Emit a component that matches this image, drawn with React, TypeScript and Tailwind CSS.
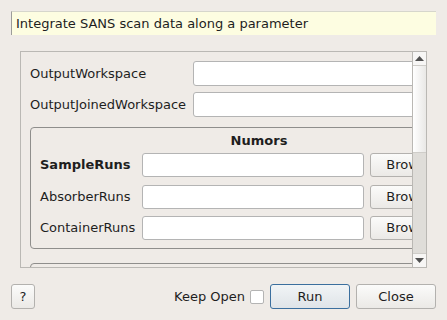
import React from 'react';

function TextInput({ className = '' }: { className?: string }) {
  return <div className={`bg-white border border-[#b4b4b4] rounded-[3px] ${className}`} />;
}

function Button({ label, className = '', primary = false }: { label: string; className?: string; primary?: boolean }) {
  return (
    <div
      className={`flex items-center justify-center rounded-[3px] border shrink-0 overflow-hidden whitespace-nowrap ${
        primary
          ? 'border-[#3b6f9e] bg-gradient-to-b from-[#f1f4f6] to-[#dfe4e8]'
          : 'border-[#b3b1ae] bg-gradient-to-b from-[#fbfbfa] to-[#ebe9e6]'
      } ${className}`}
    >
      {label}
    </div>
  );
}

function Arrow({ up }: { up?: boolean }) {
  return (
    <svg width="9" height="5" viewBox="0 0 9 5">
      {up ? <polygon points="0,5 9,5 4.5,0" fill="#505050" /> : <polygon points="0,0 9,0 4.5,5" fill="#505050" />}
    </svg>
  );
}

export default function App() {
  const runs = ['SampleRuns', 'AbsorberRuns', 'ContainerRuns'];

  return (
    <div className="w-[447px] h-[320px] bg-[#efebe7] font-['DejaVu_Sans',sans-serif] text-[13px] text-[#1e1e1e] flex flex-col px-[11px] py-[11px] overflow-hidden">
      {/* Description */}
      <div className="h-[24px] shrink-0 bg-[#fdfde1] border-l border-t border-l-[#9c9c9a] border-t-[#d6d6cc] flex items-center pl-[4px]">
        Integrate SANS scan data along a parameter
      </div>

      {/* Properties scroll area */}
      <div className="mt-[16px] mx-[9px] h-[217px] shrink-0 border border-[#bab8b4] flex overflow-hidden">
        <div className="flex-1 min-w-0 overflow-hidden">
          <div className="w-[520px] pl-[9px] pt-[9px] flex flex-col">
            <div className="flex items-center h-[25px]">
              <div className="w-[163px]">OutputWorkspace</div>
              <TextInput className="w-[300px] h-[25px]" />
            </div>
            <div className="flex items-center h-[25px] mt-[6px]">
              <div className="w-[163px]">OutputJoinedWorkspace</div>
              <TextInput className="w-[300px] h-[25px]" />
            </div>

            {/* Numors group */}
            <div className="mt-[10px] w-[458px] border border-[#8f8e8c] rounded-[4px] pl-[9px] pb-[8px]">
              <div className="h-[25px] flex items-center justify-center font-bold pr-[9px]">Numors</div>
              <div className="flex flex-col">
                {runs.map((r, i) => (
                  <div
                    key={r}
                    className={`flex items-center h-[24px] ${i === 1 ? 'mt-[8px]' : ''} ${i === 2 ? 'mt-[7px]' : ''}`}
                  >
                    <div className={`w-[102px] ${i === 0 ? 'font-bold' : ''}`}>{r}</div>
                    <TextInput className="w-[222px] h-[24px]" />
                    <Button label="Browse" className="ml-[6px] w-[80px] h-[24px]" />
                  </div>
                ))}
              </div>
            </div>

            <div className="mt-[14px] w-[458px] h-[40px] border border-[#8f8e8c] rounded-[4px]" />
          </div>
        </div>

        {/* Scrollbar */}
        <div className="w-[14px] shrink-0 border-l border-[#bab8b4] flex flex-col">
          <div className="h-[14px] shrink-0 border-b border-[#cfcdc9] bg-[#f7f6f5] flex items-center justify-center">
            <Arrow up />
          </div>
          <div className="h-[87px] shrink-0 bg-gradient-to-r from-[#ffffff] to-[#e9e8e6] border-b border-[#cfcdc9]" />
          <div className="flex-1 bg-[#dfddd9]" />
          <div className="h-[14px] shrink-0 border-t border-[#cfcdc9] bg-[#f7f6f5] flex items-center justify-center">
            <Arrow />
          </div>
        </div>
      </div>

      {/* Bottom buttons */}
      <div className="mt-[16px] h-[25px] shrink-0 flex items-center">
        <Button label="?" className="w-[24px] h-[25px]" />
        <div className="flex-1" />
        <div>Keep Open</div>
        <div className="ml-[5px] w-[14px] h-[14px] bg-white border border-[#b4b4b4] rounded-[2px]" />
        <Button label="Run" primary className="ml-[6px] w-[80px] h-[25px]" />
        <Button label="Close" className="ml-[6px] w-[80px] h-[25px]" />
      </div>
    </div>
  );
}
